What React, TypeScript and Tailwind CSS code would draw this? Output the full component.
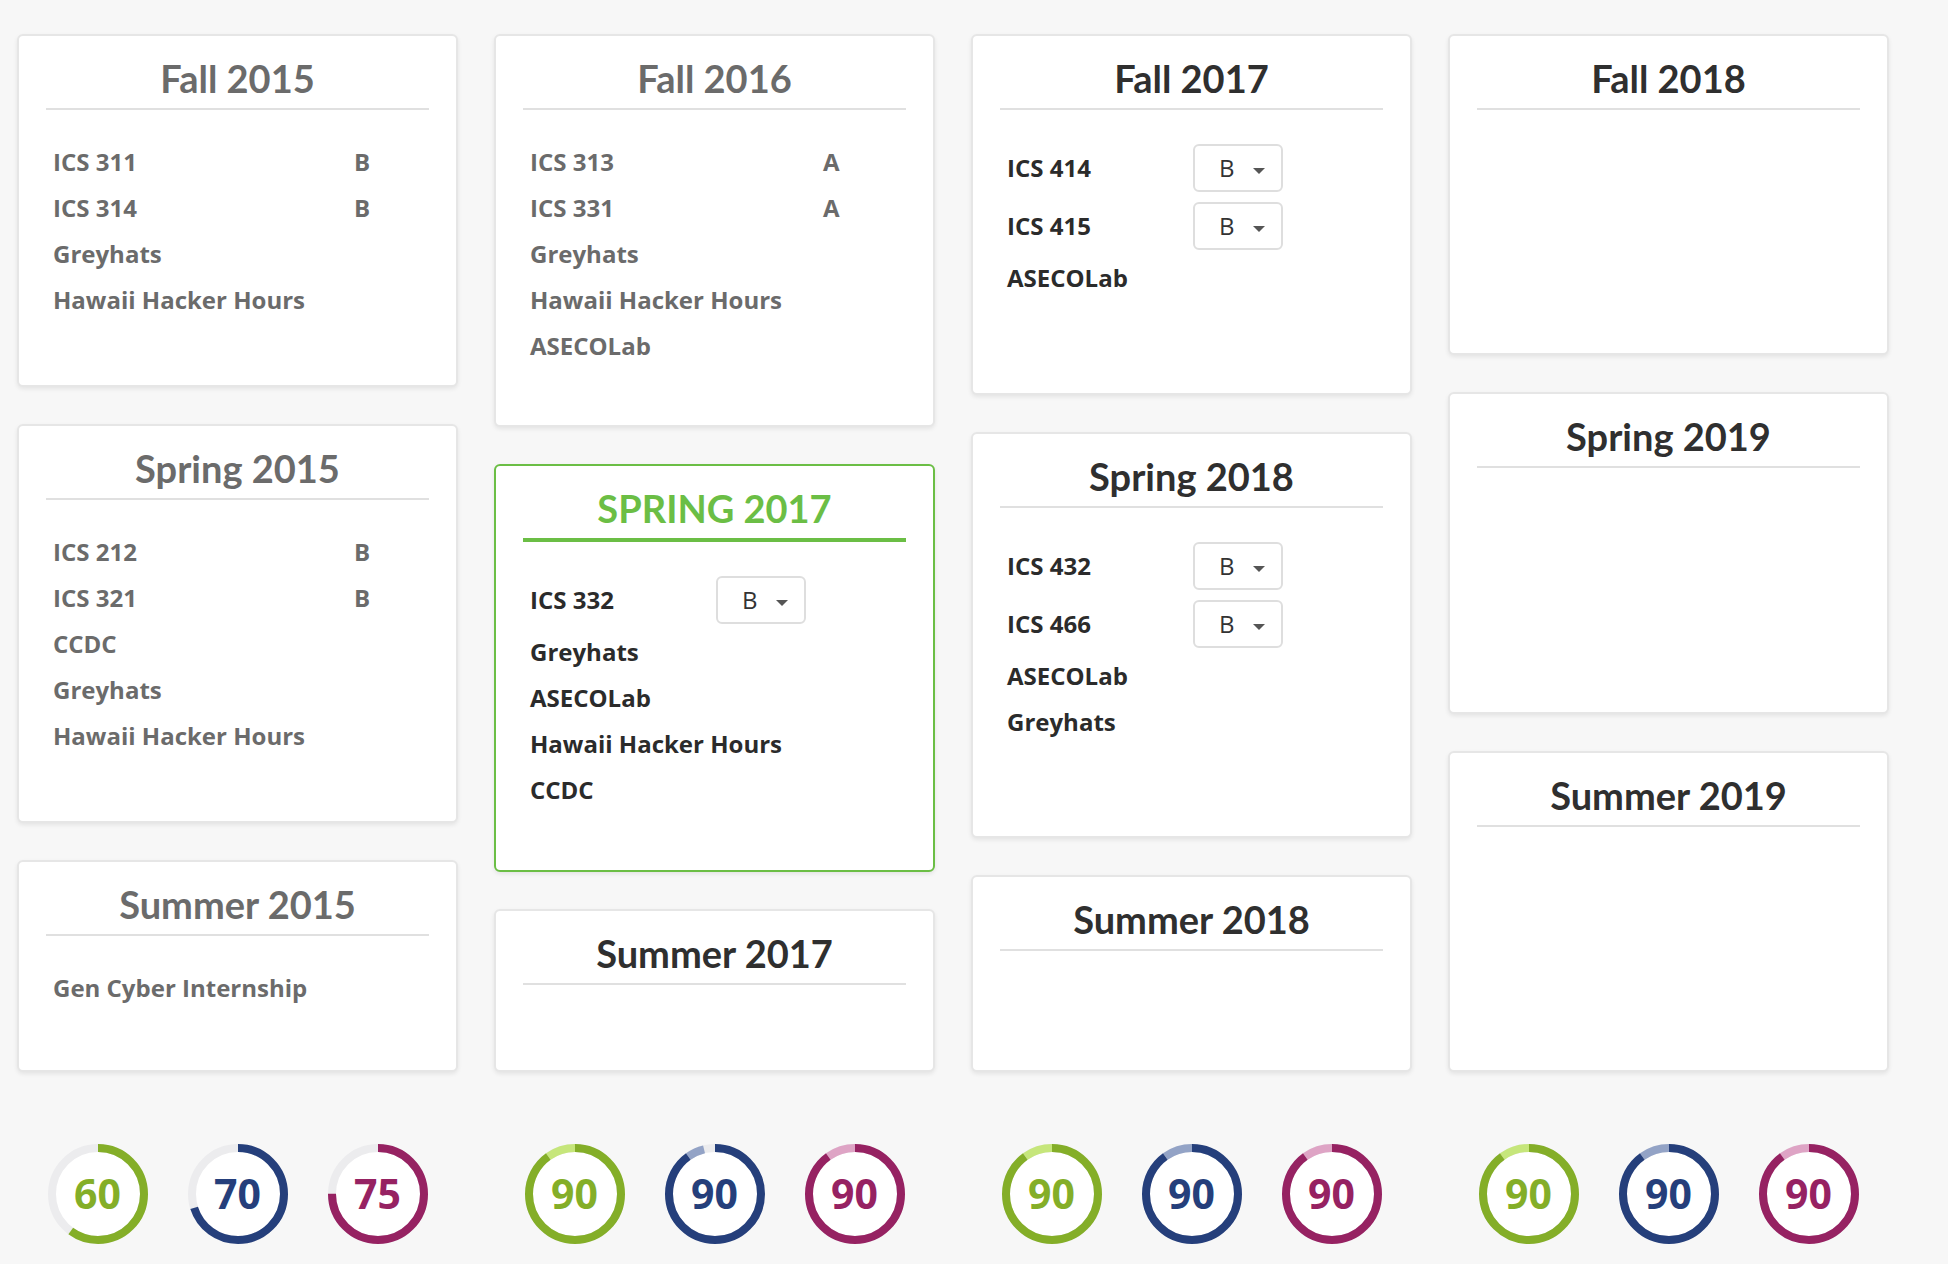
type Item = { name: string; grade?: string; select?: boolean };

type Term = {
  title: string;
  items: Item[];
  tone: "past" | "current" | "future";
  height?: string;
  gradeCol?: string;
};

type Ring = { value: number; color: string; light?: string; split?: boolean };

const GREEN = "#84ae28";
const NAVY = "#253f7b";
const PINK = "#962262";

const COLUMNS: { terms: Term[]; rings: Ring[] }[] = [
  {
    terms: [
      {
        title: "Fall 2015",
        tone: "past",
        height: "h-[353px]",
        gradeCol: "w-[301px]",
        items: [
          { name: "ICS 311", grade: "B" },
          { name: "ICS 314", grade: "B" },
          { name: "Greyhats" },
          { name: "Hawaii Hacker Hours" },
        ],
      },
      {
        title: "Spring 2015",
        tone: "past",
        height: "h-[399px]",
        gradeCol: "w-[301px]",
        items: [
          { name: "ICS 212", grade: "B" },
          { name: "ICS 321", grade: "B" },
          { name: "CCDC" },
          { name: "Greyhats" },
          { name: "Hawaii Hacker Hours" },
        ],
      },
      { title: "Summer 2015", tone: "past", items: [{ name: "Gen Cyber Internship" }] },
    ],
    rings: [
      { value: 60, color: GREEN },
      { value: 70, color: NAVY },
      { value: 75, color: PINK },
    ],
  },
  {
    terms: [
      {
        title: "Fall 2016",
        tone: "past",
        height: "h-[393px]",
        gradeCol: "w-[293px]",
        items: [
          { name: "ICS 313", grade: "A" },
          { name: "ICS 331", grade: "A" },
          { name: "Greyhats" },
          { name: "Hawaii Hacker Hours" },
          { name: "ASECOLab" },
        ],
      },
      {
        title: "SPRING 2017",
        tone: "current",
        height: "h-[408px]",
        items: [
          { name: "ICS 332", grade: "B", select: true },
          { name: "Greyhats" },
          { name: "ASECOLab" },
          { name: "Hawaii Hacker Hours" },
          { name: "CCDC" },
        ],
      },
      { title: "Summer 2017", tone: "future", items: [] },
    ],
    rings: [
      { value: 90, color: GREEN, light: "#c6e67b" },
      { value: 90, color: NAVY, light: "#93a3c6", split: true },
      { value: 90, color: PINK, light: "#dea4c5" },
    ],
  },
  {
    terms: [
      {
        title: "Fall 2017",
        tone: "future",
        height: "h-[361px]",
        items: [
          { name: "ICS 414", grade: "B", select: true },
          { name: "ICS 415", grade: "B", select: true },
          { name: "ASECOLab" },
        ],
      },
      {
        title: "Spring 2018",
        tone: "future",
        height: "h-[406px]",
        items: [
          { name: "ICS 432", grade: "B", select: true },
          { name: "ICS 466", grade: "B", select: true },
          { name: "ASECOLab" },
          { name: "Greyhats" },
        ],
      },
      { title: "Summer 2018", tone: "future", items: [] },
    ],
    rings: [
      { value: 90, color: GREEN, light: "#c6e67b" },
      { value: 90, color: NAVY, light: "#93a3c6" },
      { value: 90, color: PINK, light: "#dea4c5" },
    ],
  },
  {
    terms: [
      { title: "Fall 2018", tone: "future", height: "h-[321px]", items: [] },
      { title: "Spring 2019", tone: "future", height: "h-[322px]", items: [] },
      { title: "Summer 2019", tone: "future", items: [] },
    ],
    rings: [
      { value: 90, color: GREEN, light: "#c6e67b" },
      { value: 90, color: NAVY, light: "#93a3c6" },
      { value: 90, color: PINK, light: "#dea4c5" },
    ],
  },
];

function GradeSelect({ grade }: { grade: string }) {
  return (
    <div className="flex h-[48px] w-[90px] items-center rounded-[6px] border-2 border-[#dedede] bg-white pl-[24px]">
      <span className="font-['Open_Sans',sans-serif] text-[24px] font-normal text-[#333]">{grade}</span>
      <span className="ml-[18px] mt-[6px] h-0 w-0 border-x-[6px] border-t-[6px] border-x-transparent border-t-[#555]" />
    </div>
  );
}

function TermCard({ term }: { term: Term }) {
  const current = term.tone === "current";
  const titleColor =
    term.tone === "past" ? "text-[#6b6b6b]" : current ? "text-[#6bbe45]" : "text-[#2f2f2f]";
  const itemColor = term.tone === "past" ? "text-[#6b6b6b]" : "text-[#2b2b2b]";

  return (
    <div
      className={`${term.height ?? "flex-1"} rounded-[6px] bg-white shadow-[0_2px_4px_rgba(0,0,0,0.08)] ${
        current ? "border-2 border-[#6bbe45]" : "border-2 border-[#e6e6e6]"
      }`}
    >
      <div
        className={`mx-[27px] pt-[20px] pb-[8px] ${
          current ? "border-b-4 border-[#6bbe45]" : "border-b-2 border-[#e0e0e0]"
        }`}
      >
        <h2 className={`text-center font-['Lato',sans-serif] text-[38px] font-bold leading-[44px] ${titleColor}`}>
          {term.title}
        </h2>
      </div>
      <ul className={`mt-[29px] pl-[34px] font-['Open_Sans',sans-serif] text-[24px] font-bold ${itemColor}`}>
        {term.items.map((it) => (
          <li key={it.name} className={`flex items-center ${it.select ? "h-[58px]" : "h-[46px]"}`}>
            <span className={it.select ? "w-[186px] shrink-0" : it.grade ? `${term.gradeCol} shrink-0` : ""}>
              {it.name}
            </span>
            {it.grade && (it.select ? <GradeSelect grade={it.grade} /> : <span>{it.grade}</span>)}
          </li>
        ))}
      </ul>
    </div>
  );
}

function ScoreRing({ ring }: { ring: Ring }) {
  const r = 46;
  const c = 2 * Math.PI * r;
  const main = (ring.value / 100) * c;
  const lightLen = ring.split ? c * 0.06 : c - main;
  return (
    <div className="relative h-[100px] w-[100px]">
      <svg width="100" height="100" viewBox="0 0 100 100" className="-rotate-90">
        <circle cx="50" cy="50" r={r} fill="#fff" stroke="#ececee" strokeWidth="8" />
        {ring.light && (
          <circle
            cx="50"
            cy="50"
            r={r}
            fill="none"
            stroke={ring.light}
            strokeWidth="8"
            strokeDasharray={`0 ${main} ${lightLen} ${c}`}
          />
        )}
        <circle
          cx="50"
          cy="50"
          r={r}
          fill="none"
          stroke={ring.color}
          strokeWidth="8"
          strokeDasharray={`${main} ${c}`}
        />
      </svg>
      <span
        className="absolute inset-0 flex items-center justify-center font-['Open_Sans',sans-serif] text-[41px] font-bold"
        style={{ color: ring.color }}
      >
        {ring.value}
      </span>
    </div>
  );
}

export default function App() {
  return (
    <div className="min-h-screen bg-[#f7f7f7] pl-[17px] pt-[34px]">
      <div className="grid grid-cols-[repeat(4,441px)] gap-x-[36px]">
        {COLUMNS.map((col, i) => (
          <div key={i} className="flex flex-col">
            <div className="flex h-[1038px] flex-col gap-[37px]">
              {col.terms.map((t) => (
                <TermCard key={t.title} term={t} />
              ))}
            </div>
            <div className="mt-[72px] flex justify-center gap-[40px]">
              {col.rings.map((r, j) => (
                <ScoreRing key={j} ring={r} />
              ))}
            </div>
          </div>
        ))}
      </div>
    </div>
  );
}
